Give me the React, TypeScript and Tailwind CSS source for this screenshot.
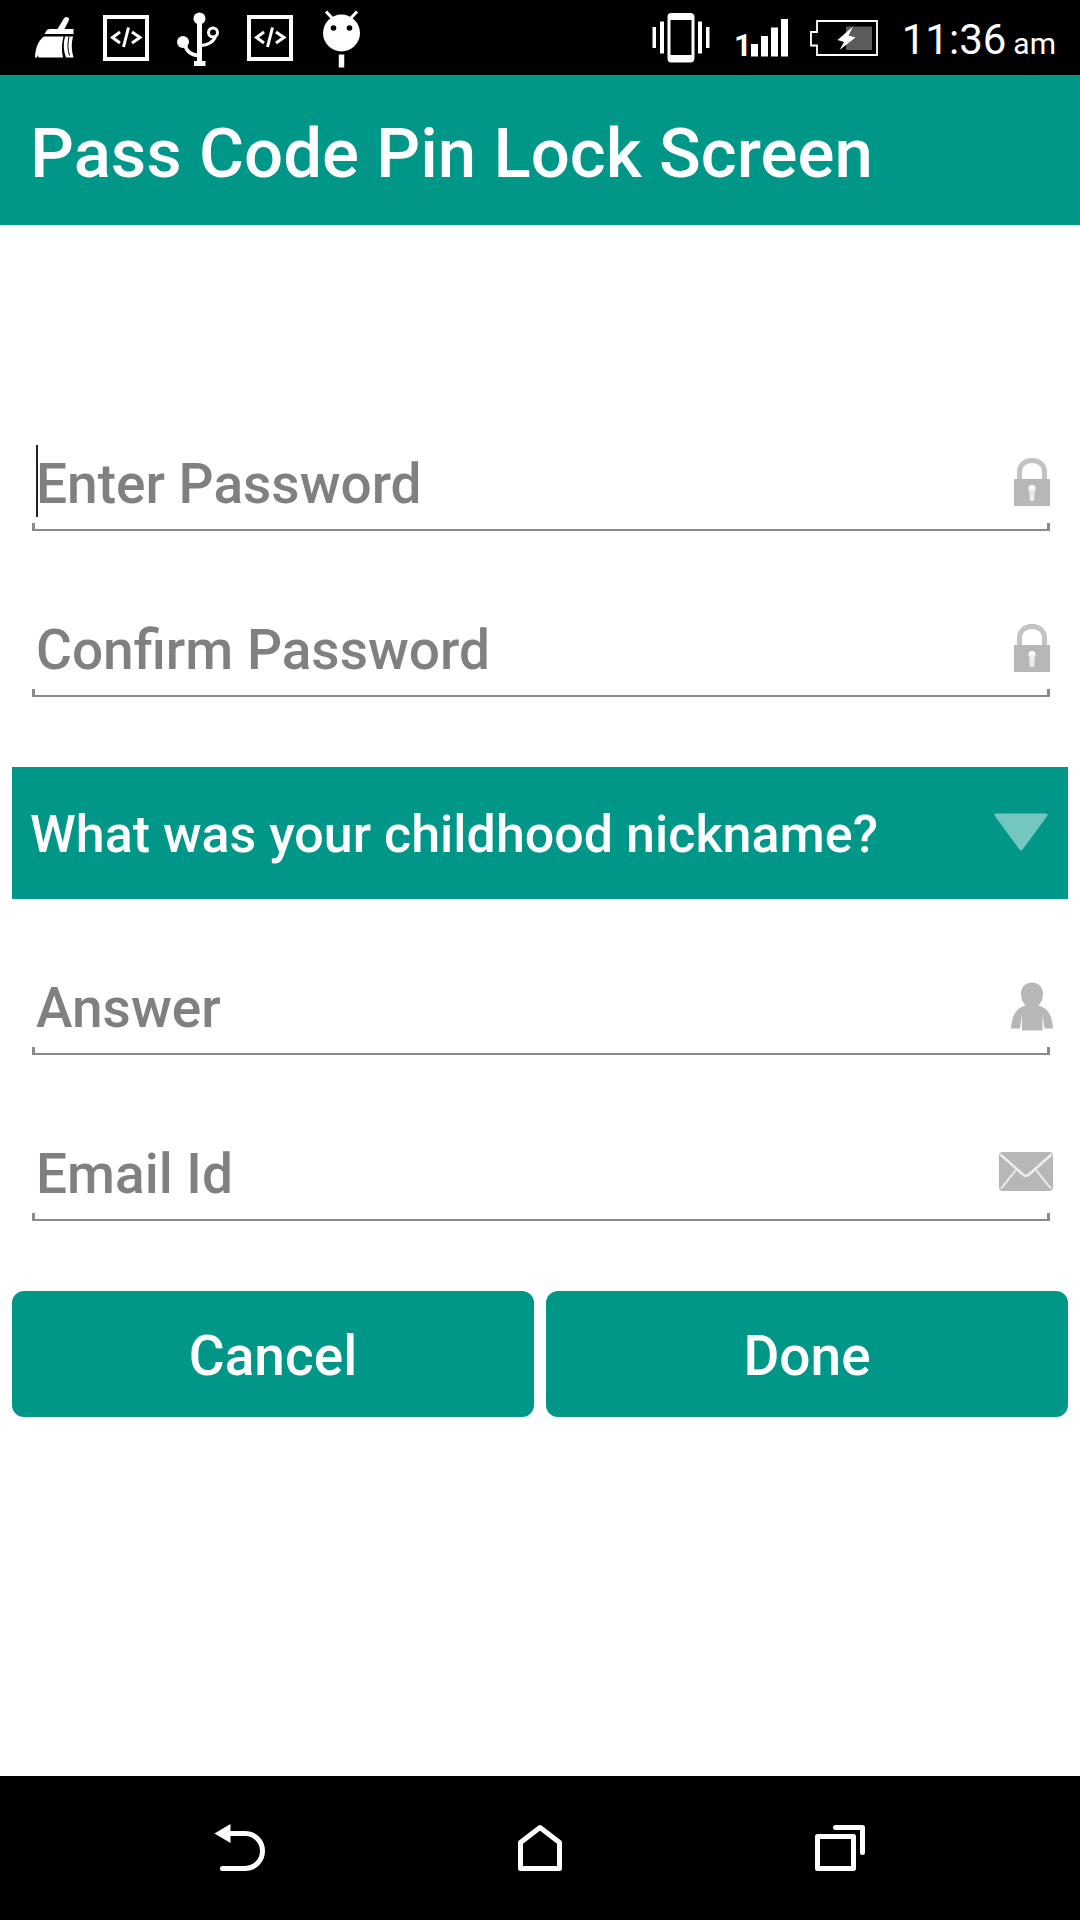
import type { ReactNode } from "react";

const BroomIcon = () => (
  <svg width="40" height="60" viewBox="0 0 40 60" fill="white">
    <path d="M28.500 11Q30.500 8 33 9.500Q35 10.500 33.500 13L29.500 21H38.500V26H9.500L11.500 22.500Q12.500 21 14.500 21H22.500Z" />
    <path d="M9 28.500H28.500C26.500 36 26.500 43 28 49.500H3.500L3 47L2 49.500H0C0.500 41 2.500 33 9 28.500Z" />
    <path d="M30 28.500H38C36 36 36.500 43 38.500 49.500H31C28.500 43 28 36 30 28.500Z" />
    <path d="M34 28.500C32.500 36 32.500 42 34.500 47.500" fill="none" stroke="black" strokeWidth="1" />
  </svg>
);

const CodeIcon = () => (
  <svg width="46" height="60" viewBox="0 0 46 60" fill="none" stroke="white">
    <rect x="2" y="9" width="42" height="42" strokeWidth="4" />
    <path d="M17 24L9.500 29.500L17 35M29 24L37 29.500L29 35" strokeWidth="3" />
    <path d="M25.500 19.500L20.500 39" strokeWidth="3" />
  </svg>
);

const UsbIcon = () => (
  <svg width="42" height="60" viewBox="0 0 42 60" fill="none" stroke="white">
    <circle cx="22.500" cy="10.500" r="6" fill="white" stroke="none" />
    <circle cx="6" cy="34" r="6" fill="white" stroke="none" />
    <path d="M22.500 10V54" strokeWidth="5" />
    <path d="M17 55.500H28.500" strokeWidth="5" />
    <path d="M8 36C9 44 14 47 22 47.500" strokeWidth="3.500" />
    <path d="M24 37.500C31 37 35.500 35 38.500 29" strokeWidth="3" />
    <circle cx="36" cy="24.500" r="4.500" strokeWidth="3" />
  </svg>
);

const DroidIcon = () => (
  <svg width="40" height="60" viewBox="0 0 40 60">
    <circle cx="20.500" cy="25" r="18.500" fill="white" />
    <path d="M5 3.500L11 10M36 3.500L30 10" stroke="white" strokeWidth="3" />
    <circle cx="12.500" cy="20" r="2.800" />
    <circle cx="28.500" cy="20" r="2.800" />
    <path d="M20.500 46.500V59.500" stroke="white" strokeWidth="5.500" />
  </svg>
);

const VibrateIcon = () => (
  <svg width="58" height="60" viewBox="0 0 58 60" fill="white">
    <path
      fillRule="evenodd"
      d="M19 5H38Q42.500 5 42.500 9V50Q42.500 54.500 38 54.500H19Q15.500 54.500 15.500 50V9Q15.500 5 19 5ZM18.500 12V47H39.500V12Z"
    />
    <rect x="0.500" y="19" width="3.500" height="21" />
    <rect x="8" y="13.500" width="4" height="32" />
    <rect x="46" y="13.500" width="4" height="32" />
    <rect x="54" y="19" width="3.500" height="21" />
  </svg>
);

const SignalIcon = () => (
  <svg width="56" height="60" viewBox="0 0 56 60" fill="white">
    <text x="2" y="48" className="font-['Roboto',sans-serif] text-[31px] font-bold">
      1
    </text>
    <rect x="19" y="36" width="7" height="12.500" />
    <rect x="29" y="28" width="7" height="20.500" />
    <rect x="39" y="19.500" width="7" height="29" />
    <rect x="49" y="11" width="7" height="37.500" />
  </svg>
);

const BatteryIcon = () => (
  <svg width="68" height="60" viewBox="0 0 68 60">
    <path
      d="M7 13H67V47H7V37.500H1V24H7Z"
      fill="none"
      stroke="white"
      strokeWidth="1.800"
    />
    <rect x="36" y="18.500" width="26" height="23.500" fill="#5c5c5c" />
    <path d="M43 18.500L27.500 32L34 34L29.500 42L45.500 29.500L38.500 27.500Z" fill="white" />
  </svg>
);

const LockIcon = () => (
  <svg width="54" height="50" viewBox="0 2 54 50" fill="#b7b7b7">
    <path d="M20.500 24V16C20.500 0.500 45.500 0.500 45.500 16V24" fill="none" stroke="#c3c3c3" strokeWidth="5" />
    <rect x="15" y="23" width="36" height="27" />
    <circle cx="33" cy="32.500" r="3.500" fill="white" />
    <rect x="30.500" y="32.500" width="5" height="12.500" rx="2" fill="#ececec" />
  </svg>
);

const PersonIcon = () => (
  <svg width="54" height="50" viewBox="0 0 54 50" fill="#b7b7b7">
    <path d="M33 0.500C40 0.500 44 5.500 44 12C44 17 42 21 39.500 23.500C48 26 53 32 54 46.500H45.500L43.500 33V48.500H23V33L21 46.500H12C13 32 18 26 26.500 23.500C24 21 22 17 22 12C22 5.500 26 0.500 33 0.500Z" />
  </svg>
);

const MailIcon = () => (
  <svg width="54" height="50" viewBox="0 0 54 50" fill="none">
    <rect y="4" width="54" height="39" rx="4" fill="#b7b7b7" />
    <path d="M1.500 6.500L24 26.500Q27 29 30 26.500L52.500 6.500" stroke="#eeeeee" strokeWidth="2.500" />
    <path d="M2 40.500L17 22M52 40.500L37 22" stroke="#e6e6e6" strokeWidth="2" />
  </svg>
);

type FieldProps = {
  id: string;
  label: string;
  type?: string;
  icon: ReactNode;
  active?: boolean;
};

const Field = ({ id, label, type = "text", icon, active }: FieldProps) => (
  <div className="ml-5 mr-[18px]">
    <div className="relative flex h-24 items-center pl-1">
      {active && <span className="absolute left-1 top-2.5 h-18 w-0.5 bg-[#222222]" />}
      <input
        id={id}
        type={type}
        placeholder=" "
        className="peer h-24 min-w-0 flex-1 bg-transparent pt-0.5 text-[55px] font-medium text-gray-800 outline-none"
      />
      {/* label sits in the box until something is typed */}
      <label
        htmlFor={id}
        className="invisible absolute left-1 top-0 flex h-24 cursor-text items-center pt-0.5 text-[55px] font-medium text-[#808080] peer-placeholder-shown:visible"
      >
        {label}
      </label>
      <span className="-mr-[3px] shrink-0">{icon}</span>
    </div>
    <div className="-mt-2 h-2 border-x-3 border-b-2 border-[#8a8a8a]" />
  </div>
);

const App = () => {
  return (
    <div className="flex min-h-screen w-full flex-col bg-white font-['Roboto',sans-serif]">
      {/* status bar */}
      <div className="flex h-[75px] items-center justify-between bg-black pl-[35px] pr-6 text-white">
        <div className="flex items-center gap-7">
          <BroomIcon />
          <CodeIcon />
          <UsbIcon />
          <CodeIcon />
          <DroidIcon />
        </div>
        <div className="flex items-center">
          <div className="flex items-center gap-[22px]">
            <VibrateIcon />
            <SignalIcon />
            <BatteryIcon />
          </div>
          <div className="ml-6 flex items-baseline gap-[7px] pt-1">
            <span className="text-[42px]">11:36</span>
            <span className="text-[30px]">am</span>
          </div>
        </div>
      </div>

      <header className="flex h-[150px] items-center bg-[#009688] px-[30px] pt-2">
        <h1 className="text-[69px] font-medium text-white">
          Pass Code Pin Lock Screen
        </h1>
      </header>

      <main className="flex-1 px-3 pt-[210px]">
        <form onSubmit={(e) => e.preventDefault()}>
          <div className="flex flex-col gap-[70px]">
            <Field id="password" label="Enter Password" type="password" icon={<LockIcon />} active />
            <Field id="confirm" label="Confirm Password" type="password" icon={<LockIcon />} />
          </div>

          <div className="relative mb-[60px] mt-[70px]">
            <select
              aria-label="Security question"
              className="h-[132px] w-full appearance-none bg-[#009688] pl-[18px] pr-24 pt-1 text-[52px] font-medium text-white outline-none"
            >
              <option>What was your childhood nickname?</option>
            </select>
            <svg
              width="54"
              height="38"
              viewBox="0 0 54 38"
              className="pointer-events-none absolute right-5 top-[46px]"
            >
              <path
                d="M2 2H52L27 36Z"
                fill="#73c7be"
                stroke="#73c7be"
                strokeWidth="3"
                strokeLinejoin="round"
              />
            </svg>
          </div>

          <div className="flex flex-col gap-[70px]">
            <Field id="answer" label="Answer" icon={<PersonIcon />} />
            <Field id="email" label="Email Id" type="email" icon={<MailIcon />} />
          </div>

          <div className="mt-[70px] flex gap-3">
            <button
              type="button"
              className="h-[126px] flex-1 rounded-xl bg-[#009688] pt-1 text-[55px] font-medium text-white"
            >
              Cancel
            </button>
            <button
              type="submit"
              className="h-[126px] flex-1 rounded-xl bg-[#009688] pt-1 text-[55px] font-medium text-white"
            >
              Done
            </button>
          </div>
        </form>
      </main>

      {/* navigation bar */}
      <nav className="flex h-36 items-center bg-black px-[90px]">
        <button aria-label="Back" className="flex flex-1 justify-center">
          <svg width="52" height="48" viewBox="0 0 52 48" fill="none">
            <path d="M0.500 9.500L16.500 0V19Z" fill="white" />
            <path
              d="M15 9.500H31A17.500 17.500 0 0 1 31 44.500H8.500"
              stroke="white"
              strokeWidth="5"
              strokeLinecap="round"
            />
          </svg>
        </button>
        <button aria-label="Home" className="flex flex-1 justify-center">
          <svg width="44" height="48" viewBox="0 0 44 48" fill="none">
            <path
              d="M2.500 18.500L22 3.500L41.500 18.500V44.500H2.500Z"
              stroke="white"
              strokeWidth="5"
              strokeLinejoin="round"
            />
          </svg>
        </button>
        <button aria-label="Recent apps" className="flex flex-1 justify-center">
          <svg
            width="50"
            height="48"
            viewBox="0 0 50 48"
            fill="none"
            stroke="white"
            strokeWidth="5"
            strokeLinecap="round"
            strokeLinejoin="round"
          >
            <rect x="2.500" y="12.500" width="36" height="32" />
            <path d="M20.500 3.500H47.500V28.500" />
          </svg>
        </button>
      </nav>
    </div>
  );
};

export default App;
